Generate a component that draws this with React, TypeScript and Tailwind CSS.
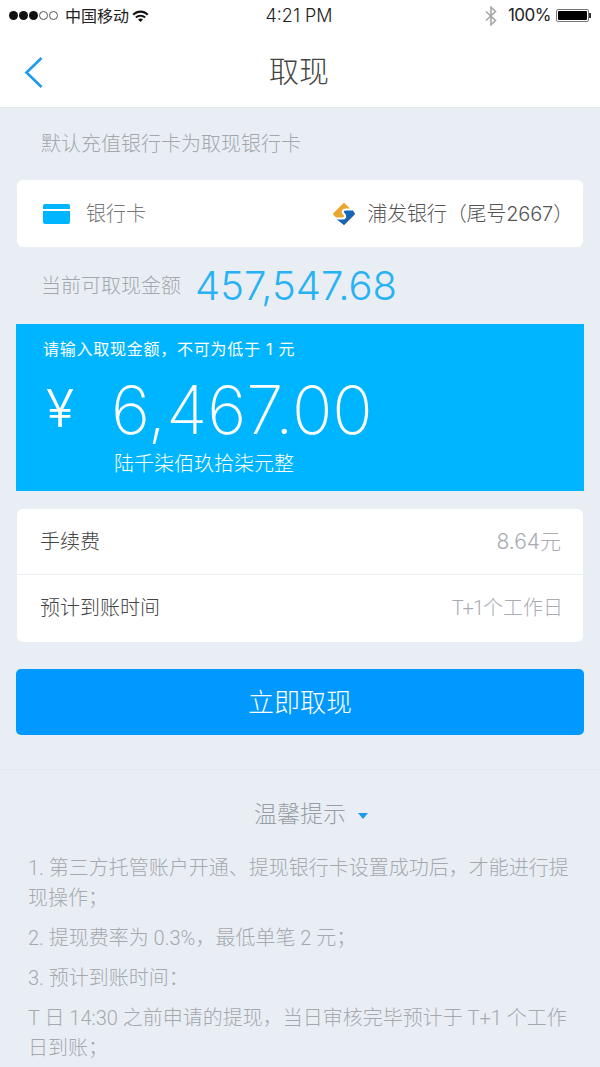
import React from 'react';

const cjk = { fontFamily: 'Inter, "Noto Sans CJK SC", "Liberation Sans", sans-serif' };

const BankLogo = () => (
  <svg width="24" height="24" viewBox="0 0 24 24">
    <path d="M12 2 L22 12 L12 22 L2 12 Z" fill="#e8a832" stroke="#e8a832" strokeWidth="2" strokeLinejoin="round" />
    <path d="M20.5 7.5 L23 12 L12 23 L3.5 16.5 L10.5 16.5 C14 16.5 15 14 12.5 12 C10 10 10.5 7.5 14 7.5 Z" fill="#1565b8" />
    <path d="M21 7.5 L14 7.5 C10.5 7.5 9.8 10 12 12 C14.2 14 13.5 16.5 10 16.5 L3 16.5" fill="none" stroke="#fff" strokeWidth="2.2" />
  </svg>
);

const Wifi = () => (
  <svg width="17" height="12" viewBox="0 0 17 12">
    <path d="M0.5 4 C5 -0.6 12 -0.6 16.5 4 L15 5.6 C11.2 1.8 5.8 1.8 2 5.6 Z" fill="#111" />
    <path d="M3.2 6.8 C6 3.9 11 3.9 13.8 6.8 L12.3 8.3 C10.2 6.3 6.8 6.3 4.7 8.3 Z" fill="#111" />
    <path d="M6 9.5 C7.4 8.3 9.6 8.3 11 9.5 L8.5 12 Z" fill="#111" />
  </svg>
);

const Bluetooth = () => (
  <svg width="12" height="20" viewBox="0 0 12 20" fill="none" stroke="#a8a8a8" strokeWidth="1.6">
    <path d="M1 5.5 L10.5 14.5 L6 18.8 L6 1.2 L10.5 5.5 L1 14.5" />
  </svg>
);

const StatusBar = () => (
  <div className="h-[30px] pt-[1px] flex items-center justify-between pl-[9px] pr-[9px] text-[#222]">
    <div className="flex items-center w-[200px]">
      <div className="flex items-center gap-[1px]">
        <span className="w-[9px] h-[9px] rounded-full bg-[#111]" />
        <span className="w-[9px] h-[9px] rounded-full bg-[#111]" />
        <span className="w-[9px] h-[9px] rounded-full bg-[#111]" />
        <span className="w-[9px] h-[9px] rounded-full border border-[#555]" />
        <span className="w-[9px] h-[9px] rounded-full border border-[#555]" />
      </div>
      <span className="ml-[7px] text-[16px] leading-none">中国移动</span>
      <span className="ml-[3px]"><Wifi /></span>
    </div>
    <span className="text-[18px] font-light ml-[-2px]">4:21 PM</span>
    <div className="flex items-center justify-end w-[200px]">
      <Bluetooth />
      <span className="ml-[11px] text-[17px] tracking-[-0.5px]">100%</span>
      <div className="ml-[5px] flex items-center">
        <div className="w-[33px] h-[13px] rounded-[2px] border border-[#777] p-[1px]">
          <div className="w-full h-full bg-black rounded-[1px]" />
        </div>
        <div className="w-[2px] h-[5px] bg-[#333]" />
      </div>
    </div>
  </div>
);

export default function App() {
  return (
    <div className="w-[600px] h-[1067px] overflow-hidden bg-[#e9eef5]" style={cjk}>
      <div className="bg-white border-b border-[#e3e8ee]">
        <StatusBar />
        <div className="h-[77px] relative flex items-center justify-center">
          <svg className="absolute left-[24px] top-[26px]" width="20" height="32" viewBox="0 0 20 32" fill="none" stroke="#1c9bea" strokeWidth="2.6">
            <path d="M17.5 2 L2.5 16.5 L17.5 31" />
          </svg>
          <span className="text-[30px] text-[#444] font-light leading-none mt-[4px] ml-[-2px]">取现</span>
        </div>
      </div>

      <div className="h-[72px] flex items-center pl-[41px] text-[20px] text-[#a3a7ac] font-light">默认充值银行卡为取现银行卡</div>

      <div className="mx-[17px] h-[67px] bg-white rounded-[6px] flex items-center justify-between pl-[26px] pr-[10px]">
        <div className="flex items-center">
          <div className="w-[27px] h-[20px] rounded-[2px] bg-[#00b5ff] flex flex-col">
            <div className="h-[5px]" />
            <div className="h-[2px] bg-white" />
          </div>
          <span className="ml-[16px] text-[20px] text-[#777] font-light">银行卡</span>
        </div>
        <div className="flex items-center">
          <BankLogo />
          <span className="ml-[11px] text-[20px] text-[#555] font-light tracking-[-0.15px]">浦发银行（尾号2667）</span>
        </div>
      </div>

      <div className="h-[77px] flex items-center pl-[41px]">
        <span className="text-[20px] text-[#a3a7ac] font-light">当前可取现金额</span>
        <span className="ml-[14px] text-[40px] text-[#27b2f4] font-light leading-none">457,547.68</span>
      </div>

      <div className="mx-[16px] h-[167px] bg-[#00b5ff] text-white pl-[27px]">
        <div className="pt-[14px] text-[16px] leading-[22px] tracking-[0.75px]">请输入取现金额，不可为低于 1 元</div>
        <div className="flex items-center h-[70px] mt-[14px]">
          <span className="text-[52px] font-light leading-none w-[68px] pl-[3px]">¥</span>
          <span className="text-[67px] font-extralight leading-none">6,467.00</span>
        </div>
        <div className="pl-[71px] mt-[6px] text-[20px] leading-[28px] font-light">陆千柒佰玖拾柒元整</div>
      </div>

      <div className="mx-[17px] mt-[18px] bg-white rounded-[6px]">
        <div className="h-[66px] flex items-center justify-between pl-[23px] pr-[22px] border-b border-[#e9edf2]">
          <span className="text-[20px] text-[#444] font-light">手续费</span>
          <span className="text-[21px] text-[#a8acb2] font-light">8.64元</span>
        </div>
        <div className="h-[67px] pb-[2px] flex items-center justify-between pl-[23px] pr-[20px]">
          <span className="text-[20px] text-[#444] font-light">预计到账时间</span>
          <span className="text-[20px] text-[#a8acb2] font-light font-['Roboto','Noto_Sans_CJK_SC',sans-serif]"><span className="tracking-[-1px]">T+1</span>个工作日</span>
        </div>
      </div>

      <div className="mx-[16px] mt-[27px] h-[66px] bg-[#0299ff] rounded-[5px] flex items-center justify-center text-white text-[26px] font-light">立即取现</div>

      <div className="mt-[34px] border-t border-[#e3e8ef] px-[28px]">
        <div className="flex items-center justify-center h-[88px] pl-[22px]">
          <span className="text-[23px] text-[#999ea5] font-light">温馨提示</span>
          <span className="ml-[12px] mt-[3px] w-0 h-0 border-l-[5.5px] border-r-[5.5px] border-t-[6px] border-l-transparent border-r-transparent border-t-[#1b9bf0]" />
        </div>
        <div className="text-[20px] text-[#a5a9ae] font-light font-['Roboto','Noto_Sans_CJK_SC',sans-serif] leading-[30px] mt-[-5px] space-y-[10px]">
          <p>1. 第三方托管账户开通、提现银行卡设置成功后，才能进行提现操作；</p>
          <p>2. 提现费率为 0.3%，最低单笔 2 元；</p>
          <p>3. 预计到账时间：</p>
          <p>T 日 14:30 之前申请的提现，当日审核完毕预计于 T+1 个工作日到账；</p>
        </div>
      </div>
    </div>
  );
}
